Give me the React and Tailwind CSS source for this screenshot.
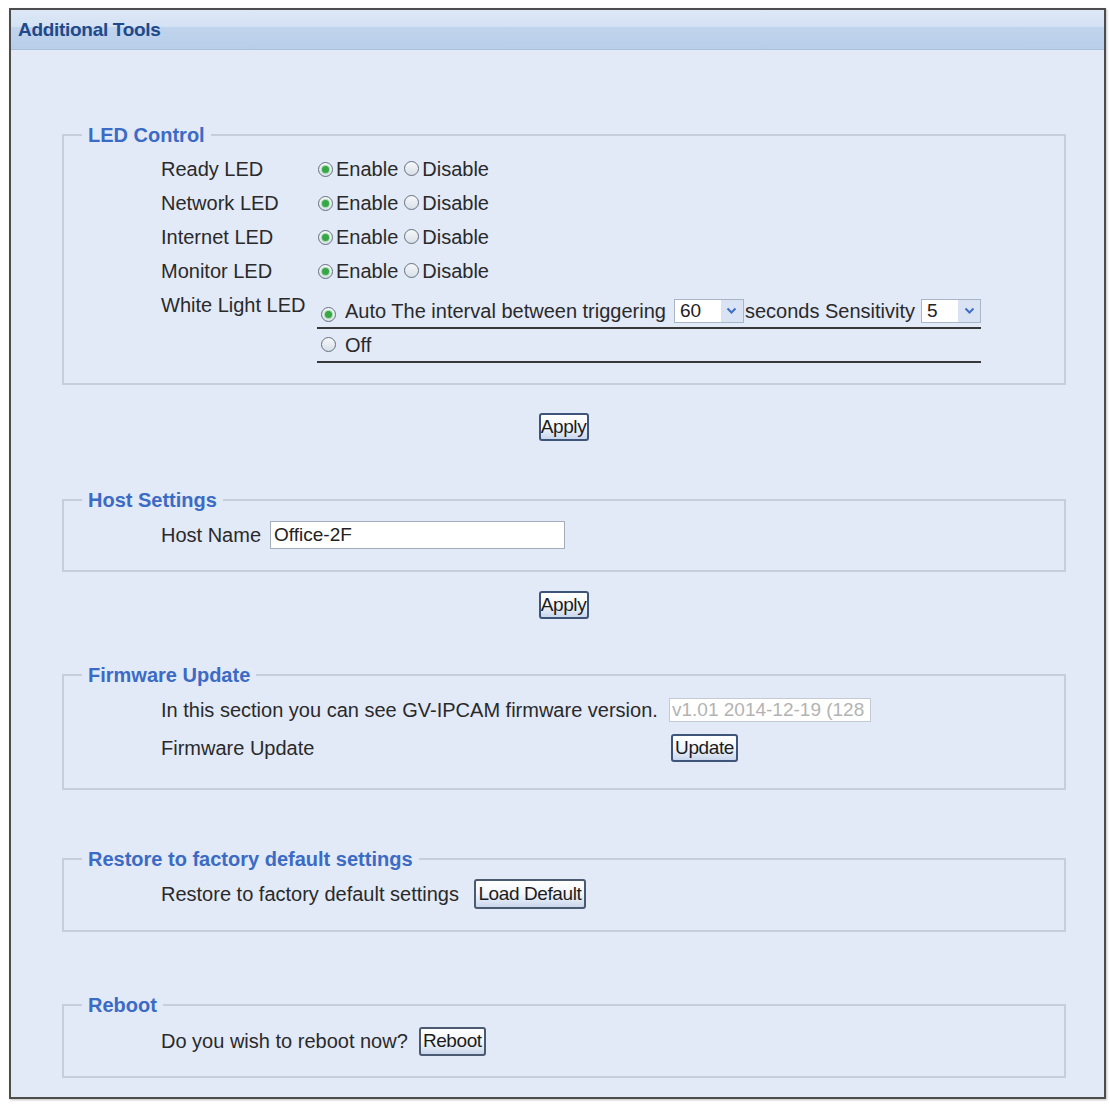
import React from 'react';

function Radio({ checked }) {
  return (
    <span className="inline-flex items-center justify-center w-[15px] h-[15px] rounded-full border border-[#64727f] bg-[linear-gradient(to_bottom,#f6f8fa,#d9e0e8)] shrink-0">
      {checked && <span className="w-[7px] h-[7px] rounded-full bg-[#36a646] shadow-[0_0_0_1px_#a6dcad]" />}
    </span>
  );
}

function Select({ value, width }) {
  return (
    <div className={`flex items-stretch h-[24px] border border-[#a9b6c8] bg-white ${width}`}>
      <span className="flex-1 pl-[5px] text-[19px] leading-[22px] text-[#222]">{value}</span>
      <span className="w-[22px] flex items-center justify-center bg-[#d9e3f3]">
        <svg width="11" height="8" viewBox="0 0 11 8">
          <path d="M1.5 1.5 L5.5 5.5 L9.5 1.5" fill="none" stroke="#3f6fc4" strokeWidth="2" />
        </svg>
      </span>
    </div>
  );
}

function Button({ children, className = '' }) {
  return (
    <button className={`h-[28px] px-0 border-2 border-[#3e5579] rounded-[3px] bg-[linear-gradient(to_bottom,#ffffff,#f2f5fa_50%,#c9d7ec)] text-[19px] leading-[22px] tracking-[-0.4px] text-[#1c1c1c] whitespace-nowrap overflow-hidden ${className}`}>
      {children}
    </button>
  );
}

function Group({ title, className = '', children }) {
  return (
    <fieldset className={`ml-[51px] mr-[38px] border-2 border-[#c6cedb] ${className}`}>
      <legend className="ml-[18px] px-[6px] text-[20px] leading-[24px] font-bold text-[#3b6bc5]">{title}</legend>
      {children}
    </fieldset>
  );
}

const leds = ['Ready LED', 'Network LED', 'Internet LED', 'Monitor LED'];

export default function App() {
  return (
    <div className="min-h-screen bg-white pt-[8px] pl-[9px] font-['Liberation_Sans',Arial,sans-serif] text-[#2a2a2a]">
      <div className="w-[1097px] h-[1091px] border-2 border-[#4d4d4d] bg-[#e2e9f7] shadow-[1px_1px_2px_rgba(0,0,0,0.25)]">
        {/* title bar */}
        <div className="h-[40px] border-b border-[#abc0da] bg-[linear-gradient(to_bottom,#dde8f6_0%,#d4e2f4_42%,#c0d4ed_45%,#b8cee9_100%)] flex items-center pl-[7px] pt-[2px]">
          <span className="text-[19px] font-bold text-[#21498a] tracking-[-0.3px]">Additional Tools</span>
        </div>

        {/* LED Control */}
        <Group title="LED Control" className="mt-[73px] pt-[5px] pb-[20px]">
          <div className="pl-[97px] text-[20px]">
            {leds.map((name) => (
              <div key={name} className="flex items-center h-[34px]">
                <span className="w-[157px]">{name}</span>
                <Radio checked />
                <span className="ml-[3px]">Enable</span>
                <span className="ml-[6px]"><Radio /></span>
                <span className="ml-[3px]">Disable</span>
              </div>
            ))}
            <div className="flex">
              <span className="w-[156px] h-[34px] leading-[34px]">White Light LED</span>
              <div className="w-[664px]">
                <div className="h-[41px] pt-[6px] flex items-center border-b-2 border-[#383838]">
                  <span className="ml-[4px]"><Radio checked /></span>
                  <span className="ml-[9px]">Auto The interval between triggering</span>
                  <span className="ml-[8px]"><Select value="60" width="w-[70px]" /></span>
                  <span className="ml-[1px]">seconds Sensitivity</span>
                  <span className="ml-[6px]"><Select value="5" width="w-[60px]" /></span>
                </div>
                <div className="h-[34px] flex items-center border-b-2 border-[#383838]">
                  <span className="ml-[4px]"><Radio /></span>
                  <span className="ml-[9px]">Off</span>
                </div>
              </div>
            </div>
          </div>
        </Group>

        <div className="flex justify-center mt-[28px] pl-[12px]">
          <Button className="w-[50px] h-[27px]">Apply</Button>
        </div>

        {/* Host Settings */}
        <Group title="Host Settings" className="mt-[47px] pt-[8px] pb-[20px]">
          <div className="pl-[97px] flex items-center text-[20px]">
            <span>Host Name</span>
            <input
              readOnly
              value="Office-2F"
              className="ml-[9px] w-[295px] h-[28px] border border-[#a3adbb] bg-white px-[3px] text-[19px] text-[#222] outline-none"
            />
          </div>
        </Group>

        <div className="flex justify-center mt-[19px] pl-[12px]">
          <Button className="w-[50px] h-[27px]">Apply</Button>
        </div>

        {/* Firmware Update */}
        <Group title="Firmware Update" className="mt-[44px] pt-[11px] pb-[25px]">
          <div className="pl-[97px] text-[20px]">
            <div className="flex items-center h-[24px]">
              <span className="w-[508px]">In this section you can see GV-IPCAM firmware version.</span>
              <input
                readOnly
                value="v1.01 2014-12-19 (128"
                className="w-[202px] h-[24px] border border-[#c3cad4] bg-white px-[2px] text-[19px] text-[#b3b3b3] outline-none"
              />
            </div>
            <div className="flex items-center mt-[11px]">
              <span className="w-[510px]">Firmware Update</span>
              <Button className="w-[67px]">Update</Button>
            </div>
          </div>
        </Group>

        {/* Restore */}
        <Group title="Restore to factory default settings" className="mt-[57px] pt-[8px] pb-[21px]">
          <div className="pl-[97px] flex items-center text-[20px]">
            <span>Restore to factory default settings</span>
            <Button className="ml-[15px] w-[112px] h-[30px] border-[#4a5a70]">Load Default</Button>
          </div>
        </Group>

        {/* Reboot */}
        <Group title="Reboot" className="mt-[61px] pt-[9px] pb-[20px]">
          <div className="pl-[97px] flex items-center text-[20px]">
            <span>Do you wish to reboot now?</span>
            <Button className="ml-[11px] w-[67px] h-[29px] border-[#4a5a70]">Reboot</Button>
          </div>
        </Group>
      </div>
    </div>
  );
}
